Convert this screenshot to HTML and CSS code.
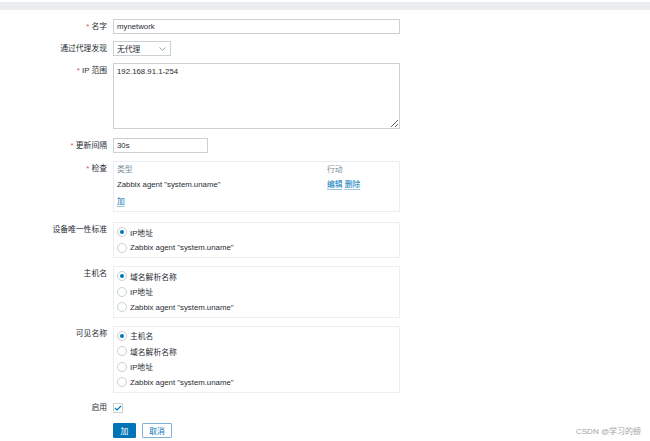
FILE: index.html
```html
<!DOCTYPE html>
<html lang="zh">
<head>
<meta charset="utf-8">
<title>Discovery rule</title>
<link rel="stylesheet" href="styles.css">
</head>
<body>
<div class="topbar"></div>
<form class="form">
  <div class="row">
    <div class="lbl"><span class="star">*</span> 名字</div>
    <input class="text wide" type="text" value="mynetwork">
  </div>
  <div class="row g7">
    <div class="lbl">通过代理发现</div>
    <div class="select"><span>无代理</span>
      <svg class="chev" width="7" height="4" viewBox="0 0 7 4"><path d="M0.5 0.5 L3.5 3.3 L6.5 0.5" fill="none" stroke="#7b8a92" stroke-width="0.8"/></svg>
    </div>
  </div>
  <div class="row g7">
    <div class="lbl"><span class="star">*</span> IP 范围</div>
    <textarea class="area">192.168.91.1-254</textarea>
  </div>
  <div class="row g9">
    <div class="lbl"><span class="star">*</span> 更新间隔</div>
    <input class="text short" type="text" value="30s">
  </div>
  <div class="row g8">
    <div class="lbl"><span class="star">*</span> 检查</div>
    <div class="box checks">
      <div class="thead"><span>类型</span><span>行动</span></div>
      <div class="trow"><span>Zabbix agent "system.uname"</span><span><a class="link">编辑</a> <a class="link">删除</a></span></div>
      <a class="link add">加</a>
    </div>
  </div>
  <div class="row g10">
    <div class="lbl">设备唯一性标准</div>
    <div class="box radios">
      <div class="radio"><span class="dot on"></span>IP地址</div>
      <div class="radio"><span class="dot"></span>Zabbix agent "system.uname"</div>
    </div>
  </div>
  <div class="row g8">
    <div class="lbl">主机名</div>
    <div class="box radios">
      <div class="radio"><span class="dot on"></span>域名解析名称</div>
      <div class="radio"><span class="dot"></span>IP地址</div>
      <div class="radio"><span class="dot"></span>Zabbix agent "system.uname"</div>
    </div>
  </div>
  <div class="row g8">
    <div class="lbl">可见名称</div>
    <div class="box radios">
      <div class="radio"><span class="dot on"></span>主机名</div>
      <div class="radio"><span class="dot"></span>域名解析名称</div>
      <div class="radio"><span class="dot"></span>IP地址</div>
      <div class="radio"><span class="dot"></span>Zabbix agent "system.uname"</div>
    </div>
  </div>
  <div class="row g10 center">
    <div class="lbl">启用</div>
    <span class="check"><svg width="8" height="6" viewBox="0 0 8 6"><path d="M1 3 L3 5 L7 1" fill="none" stroke="#0275b8" stroke-width="1.1"/></svg></span>
  </div>
  <div class="row g10">
    <div class="lbl"></div>
    <div class="buttons">
      <button type="button" class="btn primary">加</button>
      <button type="button" class="btn alt">取消</button>
    </div>
  </div>
</form>
<div class="watermark">CSDN @学习的螃</div>
</body>
</html>
```

FILE: styles.css
```css
html, body {
  margin: 0;
  padding: 0;
  background: #ffffff;
}
body {
  font-family: "Liberation Sans", "Noto Sans CJK SC", sans-serif;
  font-size: 7.8px;
  color: #1f2c33;
  position: relative;
  height: 441px;
  overflow: hidden;
}
.topbar {
  margin-top: 2px;
  height: 8px;
  background: #ebeef0;
}
.form {
  display: flex;
  flex-direction: column;
  padding-top: 9px;
}
.row {
  display: flex;
  align-items: flex-start;
}
.row.center { align-items: center; }
.g7 { margin-top: 7px; }
.g8 { margin-top: 8px; }
.g9 { margin-top: 9px; }
.g10 { margin-top: 10px; }
.lbl {
  width: 107px;
  flex: none;
  text-align: right;
  line-height: 15px;
  margin-right: 6px;
  white-space: nowrap;
}
.row.center .lbl { line-height: 10px; }
.star { color: #d64e4e; }
.text {
  box-sizing: border-box;
  height: 15px;
  border: 1px solid #c9d1d5;
  padding: 0 3px;
  font: inherit;
  color: #1f2c33;
  background: #fff;
  outline: none;
  margin: 0;
}
.wide { width: 287px; }
.short { width: 95px; }
.select {
  box-sizing: border-box;
  width: 58px;
  height: 15px;
  border: 1px solid #c9d1d5;
  padding: 0 3px;
  display: flex;
  align-items: center;
  justify-content: space-between;
}
.chev { margin-right: 1px; }
.area {
  box-sizing: border-box;
  width: 287px;
  height: 66px;
  border: 1px solid #c9d1d5;
  padding: 3px 3px;
  font: inherit;
  line-height: 10px;
  color: #1f2c33;
  margin: 0;
  resize: both;
  outline: none;
}
.box {
  box-sizing: border-box;
  width: 287px;
  border: 1px solid #ebeef0;
}
.checks {
  padding: 0 4px 4px 3px;
  height: 51px;
}
.thead, .trow {
  display: grid;
  grid-template-columns: 210px auto;
  line-height: 15px;
}
.thead { color: #768d99; }
.link {
  color: #0275b8;
  text-decoration: underline;
  text-decoration-color: #9cc7e3;
  text-underline-offset: 2px;
  cursor: pointer;
}
.add {
  display: inline-block;
  margin-top: 2px;
  line-height: 15px;
}
.radios {
  padding: 1.5px 3px;
}
.radio {
  height: 15.5px;
  display: flex;
  align-items: center;
}
.dot {
  box-sizing: border-box;
  width: 10px;
  height: 10px;
  border-radius: 50%;
  border: 1px solid #c9d1d5;
  background: #fff;
  margin-right: 3px;
  flex: none;
  display: flex;
  align-items: center;
  justify-content: center;
}
.dot.on::after {
  content: "";
  width: 4px;
  height: 4px;
  border-radius: 50%;
  background: #0275b8;
}
.check {
  box-sizing: border-box;
  width: 10px;
  height: 10px;
  border: 1px solid #c9d1d5;
  display: flex;
  align-items: center;
  justify-content: center;
}
.buttons {
  display: flex;
  gap: 6px;
}
.btn {
  box-sizing: border-box;
  height: 15px;
  padding: 0;
  font: inherit;
  border-radius: 1px;
  cursor: pointer;
}
.primary {
  width: 23px;
  background: #0275b8;
  border: 1px solid #0275b8;
  color: #fff;
}
.alt {
  width: 30px;
  background: #fff;
  border: 1px solid #7fb2d6;
  color: #0275b8;
}
.watermark {
  position: absolute;
  right: 9px;
  top: 427px;
  font-size: 8px;
  line-height: 10px;
  color: #a3a3a3;
}
```
